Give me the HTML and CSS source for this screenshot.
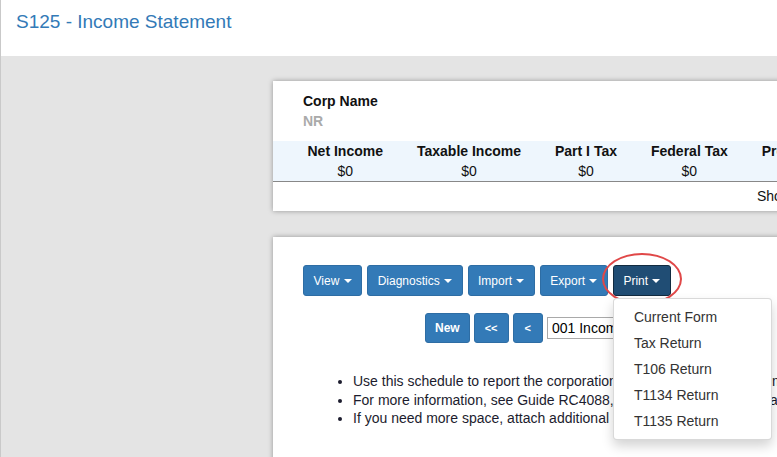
FILE: index.html
```html
<!DOCTYPE html>
<html>
<head>
<meta charset="utf-8">
<link rel="stylesheet" href="styles.css">
</head>
<body>
<header class="page-header">
  <h1 class="page-title">S125 - Income Statement</h1>
</header>
<main class="main">
  <section class="card summary-card">
    <div class="corp">
      <div class="corp-label">Corp Name</div>
      <div class="corp-value">NR</div>
    </div>
    <div class="totals">
      <div class="total"><div class="total-label">Net Income</div><div class="total-value">$0</div></div>
      <div class="total"><div class="total-label">Taxable Income</div><div class="total-value">$0</div></div>
      <div class="total"><div class="total-label">Part I Tax</div><div class="total-value">$0</div></div>
      <div class="total"><div class="total-label">Federal Tax</div><div class="total-value">$0</div></div>
      <div class="total"><div class="total-label">Provincial Tax</div><div class="total-value">$0</div></div>
    </div>
    <div class="show-row"><span class="show-link">Show Details</span></div>
  </section>

  <section class="card form-card">
    <div class="toolbar">
      <button class="btn">View <span class="caret"></span></button>
      <button class="btn">Diagnostics <span class="caret"></span></button>
      <button class="btn">Import <span class="caret"></span></button>
      <button class="btn">Export <span class="caret"></span></button>
      <div class="btn-group">
        <button class="btn btn-active">Print <span class="caret"></span></button>
        <span class="highlight"></span>
        <ul class="dropdown">
          <li>Current Form</li>
          <li>Tax Return</li>
          <li>T106 Return</li>
          <li>T1134 Return</li>
          <li>T1135 Return</li>
        </ul>
      </div>
    </div>
    <div class="nav-row">
      <button class="btn btn-bold btn-new">New</button>
      <button class="btn btn-bold btn-sm">&lt;&lt;</button>
      <button class="btn btn-bold btn-sm btn-prev">&lt;</button>
      <div class="select">001 Income Statement</div>
    </div>
    <ul class="notes">
      <li>Use this schedule to report the corporation's income statement information from its financial statements.</li>
      <li>For more information, see Guide RC4088, General Index of Financial Information (GIFI).</li>
      <li>If you need more space, attach additional schedules.</li>
    </ul>
  </section>
</main>
</body>
</html>
```
FILE: styles.css
```css
* { box-sizing: border-box; }
html, body { height: 100%; }
body {
  margin: 0;
  background: #e4e4e4;
  border-left: 1px solid #c9c9c9;
  font-family: "Liberation Sans", Arial, sans-serif;
  font-size: 14px;
  color: #222;
  overflow: hidden;
}
.page-header {
  background: #fff;
  height: 56px;
  padding: 0 15px;
}
.page-title {
  margin: 0;
  padding-top: 11px;
  font-size: 19px;
  line-height: 22px;
  font-weight: normal;
  color: #337ab7;
}
.main {
  padding: 25px 0 0 272px;
  width: 1100px;
}
.card {
  background: #fff;
  width: 620px;
  box-shadow: 0 0 5px rgba(0,0,0,0.35);
}
.summary-card { margin-bottom: 26px; }
.corp { padding: 10px 30px 10px; line-height: 20px; }
.corp-label { font-weight: bold; color: #111; }
.corp-value { font-weight: bold; color: #aaa; }
.totals {
  display: flex;
  background: #eef6fd;
  border-bottom: 1px solid #888;
  padding-left: 17.5px;
}
.total {
  padding: 0 17px;
  text-align: center;
  line-height: 20px;
  white-space: nowrap;
}
.total-label { font-weight: bold; color: #111; }
.total-value { color: #111; }
.show-row {
  height: 29px;
  line-height: 29px;
  padding-left: 484px;
  color: #111;
}
.form-card {
  height: 300px;
  padding-top: 28px;
}
.toolbar {
  display: flex;
  padding-left: 30px;
  gap: 5px;
}
.btn {
  font-family: "Liberation Sans", Arial, sans-serif;
  font-size: 12px;
  height: 31px;
  padding: 0 9.5px;
  color: #fff;
  background: #337ab7;
  border: 1px solid #2e6da4;
  border-radius: 3px;
  white-space: nowrap;
}
.caret {
  display: inline-block;
  width: 0;
  height: 0;
  margin-left: 1px;
  vertical-align: middle;
  border-top: 4px solid #fff;
  border-left: 4px solid transparent;
  border-right: 4px solid transparent;
}
.btn-group { position: relative; margin-left: 0; }
.btn-active {
  background: #204d74;
  border-color: #122b40;
  padding: 0 9.5px;
}
.highlight {
  position: absolute;
  left: -11px;
  top: -12px;
  width: 80px;
  height: 52px;
  border: 2.5px solid #e04848;
  border-radius: 50%;
  pointer-events: none;
}
.dropdown {
  position: absolute;
  top: 33px;
  left: 0;
  width: 159px;
  margin: 0;
  padding: 5px 0;
  list-style: none;
  background: #fff;
  border: 1px solid rgba(0,0,0,0.15);
  border-radius: 4px;
  box-shadow: 0 6px 12px rgba(0,0,0,0.175);
  z-index: 10;
}
.dropdown li {
  padding: 3px 20px;
  line-height: 20px;
  color: #333;
  white-space: nowrap;
}
.nav-row {
  display: flex;
  align-items: center;
  gap: 4px;
  margin-top: 17px;
  padding-left: 152px;
}
.btn-bold { font-weight: bold; height: 30px; }
.btn-new { padding: 0 9px; }
.btn-sm { padding: 0 10px; font-size: 11px; }
.btn-prev { padding: 0 11px; }
.select {
  height: 22px;
  width: 200px;
  border: 1px solid #a9a9a9;
  padding: 0 4px;
  line-height: 20px;
  color: #000;
  white-space: nowrap;
  overflow: hidden;
}
.notes {
  margin: 29px 0 0;
  padding-left: 80px;
  line-height: 18.5px;
  color: #1c1c2e;
  white-space: nowrap;
}
```
